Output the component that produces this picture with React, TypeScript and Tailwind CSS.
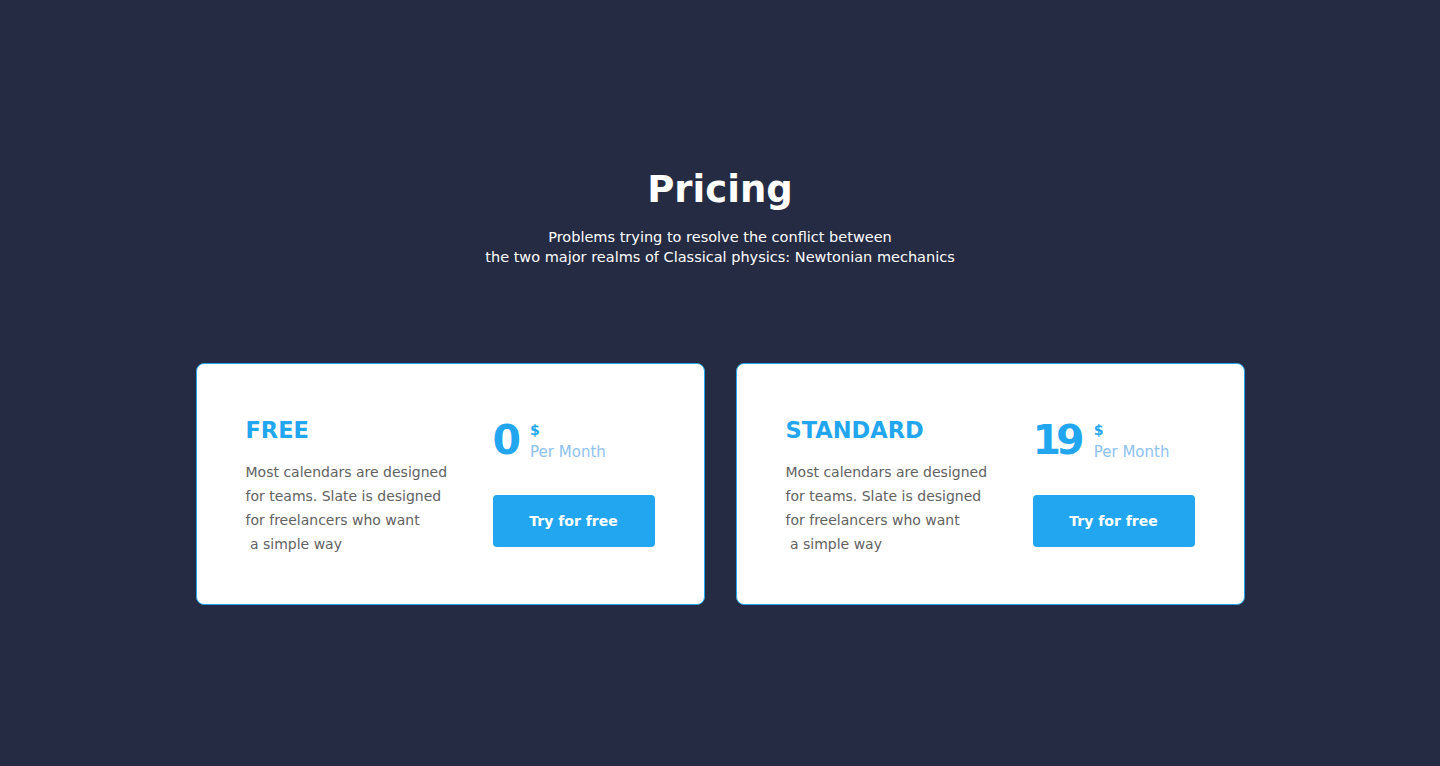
const plans = [
  { name: "FREE", price: "0" },
  { name: "STANDARD", price: "19" },
];

function PlanCard({ name, price }: { name: string; price: string }) {
  return (
    <div className="flex h-[242px] w-[509px] justify-between rounded-lg border border-[#23A6F0] bg-white pt-[51px] pr-[49px] pl-[49px]">
      <div className="flex flex-col">
        <h3 className="text-[22.5px] leading-[30px] font-bold text-[#23A6F0]">
          {name}
        </h3>
        <p className="mt-[15px] text-[14px] leading-[24px] text-[#626262]">
          Most calendars are designed
          <br />
          for teams. Slate is designed
          <br />
          for freelancers who want
          <br />
          &nbsp;a simple way
        </p>
      </div>
      <div className="flex w-[162px] flex-col">
        <div className="mt-[5px] flex items-start gap-[14px]">
          <span className="text-[41px] leading-none font-bold tracking-[-0.12em] text-[#23A6F0]">
            {price}
          </span>
          <div className="flex flex-col">
            <span className="mt-[2px] text-[14px] leading-[16px] font-bold text-[#23A6F0]">
              $
            </span>
            <span className="mt-[6px] text-[15px] leading-[16px] text-[#8EC2F2]">
              Per Month
            </span>
          </div>
        </div>
        <button
          type="button"
          className="mt-[34px] h-[52px] w-[162px] rounded bg-[#23A6F0] text-[14px] font-bold text-white"
        >
          Try for free
        </button>
      </div>
    </div>
  );
}

export default function App() {
  return (
    <div
      className="flex h-[766px] w-full flex-col items-center bg-[#252B42] pt-[166px]"
      style={{ fontFamily: '"DejaVu Sans", "Open Sans", sans-serif' }}
    >
      <h2 className="text-[37px] leading-[48px] font-bold text-white">Pricing</h2>
      <p className="mt-[13px] text-center text-[14.5px] leading-[20px] text-white">
        Problems trying to resolve the conflict between
        <br />
        the two major realms of Classical physics: Newtonian mechanics
      </p>
      <div className="mt-[96px] flex gap-[31px]">
        {plans.map((p) => (
          <PlanCard key={p.name} name={p.name} price={p.price} />
        ))}
      </div>
    </div>
  );
}
